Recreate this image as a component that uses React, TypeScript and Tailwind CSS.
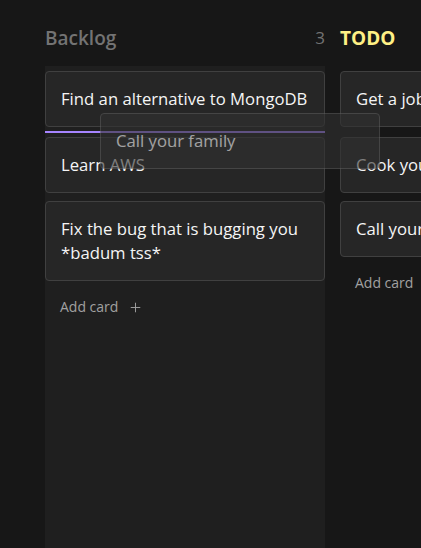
import React from "react";
import { Plus } from "lucide-react";

type Column = {
  title: string;
  titleClass: string;
  cards: string[];
  active?: boolean;
};

const columns: Column[] = [
  {
    title: "Backlog",
    titleClass: "text-neutral-500 font-semibold",
    cards: [
      "Find an alternative to MongoDB",
      "Learn AWS",
      "Fix the bug that is bugging you *badum tss*",
    ],
    active: true,
  },
  {
    title: "TODO",
    titleClass: "text-yellow-200 font-bold",
    cards: ["Get a job", "Cook your dinner", "Call your family"],
  },
];

const Card = ({ text }: { text: string }) => (
  <div className="rounded border border-neutral-700 bg-neutral-800 p-[15px] text-[16.7px] leading-6 text-neutral-100">
    {text}
  </div>
);

const BoardColumn = ({ col }: { col: Column }) => (
  <div className="flex w-[280px] shrink-0 flex-col">
    <div className="mb-[14px] flex h-7 items-center justify-between">
      <h3 className={`text-[19px] leading-7 ${col.titleClass}`}>{col.title}</h3>
      <span className="text-[17px] text-neutral-500">{col.cards.length}</span>
    </div>
    <div
      className={`flex flex-1 flex-col pt-[5px] ${
        col.active ? "bg-[#1f1f1f]" : ""
      }`}
    >
      <Card text={col.cards[0]} />
      <div
        className={`my-1 h-0.5 ${col.active ? "bg-violet-400" : "bg-transparent"}`}
      ></div>
      <div className="flex flex-col gap-2">
        {col.cards.slice(1).map((c) => (
          <Card key={c} text={c} />
        ))}
      </div>
      <button className="mt-4 flex items-center gap-2.5 px-[15px] text-left text-sm leading-5 text-neutral-400">
        Add card
        <Plus size={15} strokeWidth={1.5} />
      </button>
    </div>
  </div>
);

export default function App() {
  return (
    <div
      className="relative h-[548px] overflow-hidden bg-[#171717]"
      style={{ fontFamily: '"Open Sans", "Noto Sans", sans-serif' }}
    >
      <div className="flex h-full gap-[15px] pl-[45px] pt-6">
        {columns.map((col) => (
          <BoardColumn key={col.title} col={col} />
        ))}
      </div>
      {/* drag overlay */}
      <div className="absolute left-[100px] top-[113px] w-[280px] rounded border border-[#5a5a5a] bg-[#303030] p-[15px] text-[16.7px] leading-6 text-neutral-100 opacity-60">
        Call your family
      </div>
    </div>
  );
}
